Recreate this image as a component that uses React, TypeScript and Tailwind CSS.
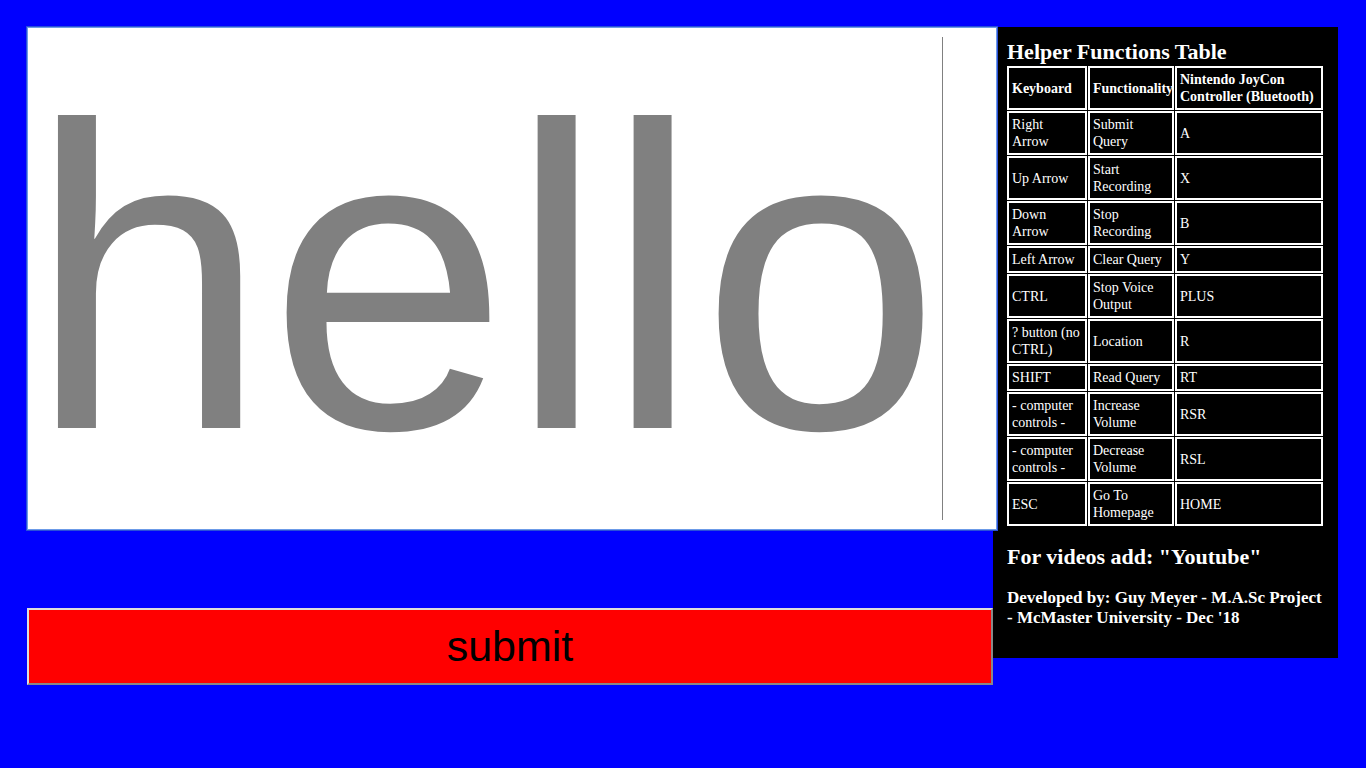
import { useState } from "react";

const rows: [string, string, string][] = [
  ["Right Arrow", "Submit Query", "A"],
  ["Up Arrow", "Start Recording", "X"],
  ["Down Arrow", "Stop Recording", "B"],
  ["Left Arrow", "Clear Query", "Y"],
  ["CTRL", "Stop Voice Output", "PLUS"],
  ["? button (no CTRL)", "Location", "R"],
  ["SHIFT", "Read Query", "RT"],
  ["- computer controls -", "Increase Volume", "RSR"],
  ["- computer controls -", "Decrease Volume", "RSL"],
  ["ESC", "Go To Homepage", "HOME"],
];

const cell = "border-2 border-white p-[3px] text-left align-middle";

function HelperTable() {
  return (
    <table className="-mx-px w-[318px] table-fixed border-separate border-spacing-px text-[14px] leading-[17px]">
      <colgroup>
        <col className="w-20" />
        <col className="w-[86px]" />
        <col />
      </colgroup>
      <thead>
        <tr>
          <th className={cell}>Keyboard</th>
          <th className={cell}>Functionality</th>
          <th className={cell}>Nintendo JoyCon Controller (Bluetooth)</th>
        </tr>
      </thead>
      <tbody>
        {rows.map(([key, action, joycon], i) => (
          <tr key={i}>
            <td className={cell}>{key}</td>
            <td className={cell}>{action}</td>
            <td className={cell}>{joycon}</td>
          </tr>
        ))}
      </tbody>
    </table>
  );
}

export default function App() {
  const [query, setQuery] = useState("hello");
  return (
    <div className="min-h-screen bg-[#0000ff] p-[27px]">
      <div className="flex items-start pr-px">
        <form className="min-w-0 flex-1" onSubmit={(e) => e.preventDefault()}>
          <div className="relative -mr-1 bg-white outline-1 outline-[#2a50d8]">
            <input
              aria-label="Query"
              value={query}
              onChange={(e) => setQuery(e.target.value)}
              className="block h-[503px] w-full border border-[#6c9be8] bg-white font-['Liberation_Sans',Arial,sans-serif] text-[432px] leading-none text-[#808080] outline-none"
            />
            <span className="absolute top-[10px] right-[54px] h-[483px] w-px bg-[#808080]" />
          </div>
          <button
            type="submit"
            className="mt-[78px] h-[77px] w-full border-2 border-t-[#dddddd] border-r-[#888888] border-b-[#888888] border-l-[#dddddd] bg-[#ff0000] font-['Liberation_Sans',Arial,sans-serif] text-[43px] leading-none text-black"
          >
            submit
          </button>
        </form>
        <aside className="w-[345px] bg-black px-[14px] pt-3 pb-[30px] font-['Liberation_Serif','Times_New_Roman',serif] text-white">
          <h2 className="text-[22px] leading-[26px] font-bold">Helper Functions Table</h2>
          <HelperTable />
          <h2 className="mt-[17px] text-[22px] leading-[26px] font-bold">For videos add: "Youtube"</h2>
          <h3 className="mt-[18px] text-[17px] leading-5 font-bold">
            Developed by: Guy Meyer - M.A.Sc Project - McMaster University - Dec '18
          </h3>
        </aside>
      </div>
    </div>
  );
}
